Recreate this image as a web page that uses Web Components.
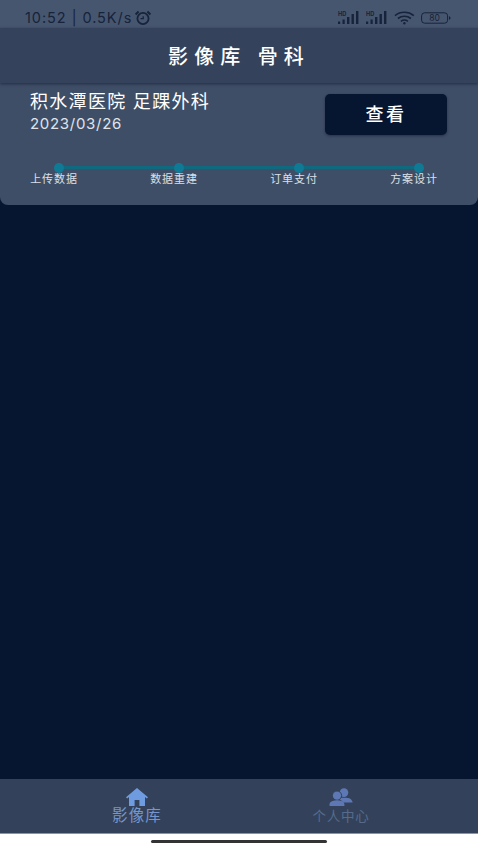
<!DOCTYPE html>
<html lang="zh">
<head>
<meta charset="utf-8">
<title>影像库</title>
<style>
  html, body { margin: 0; height: 100%; background: #061631; }
  body { font-family: Inter, "Noto Sans CJK SC", sans-serif; }
</style>
</head>
<body>
<app-shell>
  <status-bar slot="status"></status-bar>
  <app-header slot="header">影像库 骨科</app-header>
  <case-card hospital="积水潭医院 足踝外科" date="2023/03/26" action="查看">
    <progress-steps steps="上传数据,数据重建,订单支付,方案设计"></progress-steps>
  </case-card>
  <tab-bar slot="tabs">
    <tab-item label="影像库" icon="home" active></tab-item>
    <tab-item label="个人中心" icon="people"></tab-item>
  </tab-bar>
  <home-indicator slot="indicator"></home-indicator>
</app-shell>

<script>
class AppShell extends HTMLElement {
  constructor() {
    super();
    this.attachShadow({ mode: 'open' }).innerHTML = `<style>
      :host { display: flex; flex-direction: column; height: 850px; background: #061631; overflow: hidden; }
      main { flex: 1; min-height: 0; }
    </style>
    <slot name="status"></slot>
    <slot name="header"></slot>
    <main><slot></slot></main>
    <slot name="tabs"></slot>
    <slot name="indicator"></slot>`;
  }
}

class StatusBar extends HTMLElement {
  constructor() {
    super();
    this.attachShadow({ mode: 'open' }).innerHTML = `<style>
      :host { display: flex; align-items: center; justify-content: space-between; box-sizing: border-box;
        height: 28px; padding: 7px 27px 0 25px; background: #47566f; color: #16233a; }
      .left { display: flex; align-items: center; gap: 2px; font-size: 14.5px; letter-spacing: .95px; white-space: nowrap; }
      .right { display: flex; align-items: center; gap: 6px; }
      svg { display: block; }
    </style>
    <div class="left"><span>10:52 | 0.5K/s</span>
      <svg width="18" height="16" viewBox="0 0 18 16" fill="none" stroke="#16233a">
        <circle cx="9" cy="8.500" r="5.600" stroke-width="1.800"/>
        <path d="M6.500 8.700h2.700V6.200" stroke-width="1.300"/>
        <path d="M1.600 4.400 4.600 1.600M16.400 4.400 13.400 1.600" stroke-width="2"/>
      </svg>
    </div>
    <div class="right">
      ${this.signal()}${this.signal()}
      <svg width="21" height="14" viewBox="0 0 21 14" fill="none" stroke="#16233a" stroke-width="1.600">
        <path d="M1 4.600C6.400 .2 14.400 .2 19.800 4.600"/>
        <path d="M3.900 7.500c3.800-3 9.200-3 13 0"/>
        <path d="M6.900 10.300c2.100-1.500 5-1.500 7 0"/>
        <circle cx="10.400" cy="12.200" r="1.200" fill="#16233a" stroke="none"/>
      </svg>
      <svg width="30" height="12" viewBox="0 0 30 12">
        <rect x=".6" y=".8" width="26" height="10.400" rx="3" fill="none" stroke="#16233a" stroke-width="1"/>
        <path d="M28 4.200c1 .3 1.500 1 1.500 1.800s-.5 1.500-1.500 1.800z" fill="#16233a"/>
        <text x="13.600" y="9" text-anchor="middle" font-size="8.500" font-family="Inter, sans-serif" fill="#16233a">80</text>
      </svg>
    </div>`;
  }

  signal() {
    return `<svg width="22" height="13" viewBox="0 0 22 13" fill="#16233a">
      <text x="0" y="5.400" font-size="5.600" font-weight="700" font-family="Inter, sans-serif">HD</text>
      <rect x="0" y="10.500" width="2.200" height="2.500"/><rect x="4.500" y="8.500" width="2.200" height="4.500"/>
      <rect x="9" y="6" width="2.400" height="7"/><rect x="13.500" y="3" width="2.400" height="10"/>
      <rect x="18" y="0" width="2.400" height="13"/>
    </svg>`;
  }
}

class AppHeader extends HTMLElement {
  constructor() {
    super();
    this.attachShadow({ mode: 'open' }).innerHTML = `<style>
      :host { display: flex; align-items: center; justify-content: center; position: relative; z-index: 1; box-sizing: border-box;
        height: 55px; background: #34435b; color: #fff; font-size: 20px; font-weight: 500; letter-spacing: 6.1px;
        box-shadow: 0 1px 3px rgba(8, 16, 34, .55); padding-bottom: 1px; }
    </style><slot></slot>`;
  }
}

class CaseCard extends HTMLElement {
  constructor() {
    super();
    this.attachShadow({ mode: 'open' }).innerHTML = `<style>
      :host { display: block; box-sizing: border-box; height: 122px; padding: 9px 31px 0 30px;
        background: #3f4e67; border-radius: 0 0 8px 8px; color: #fff; }
      .top { display: flex; justify-content: space-between; align-items: flex-start; }
      .name { font-size: 18px; line-height: 20px; letter-spacing: 1.3px; white-space: nowrap; }
      .date { margin-top: 2px; font-size: 15px; line-height: 20px; letter-spacing: .7px; color: #dfe3ea; }
      button { box-sizing: border-box; width: 122px; height: 41px; margin-top: 2px; padding: 0 0 3px; border: 0; border-radius: 5px;
        background: #061631; color: #fff; font: 500 18px Inter, "Noto Sans CJK SC", sans-serif; letter-spacing: 2.5px;
        box-shadow: 0 1px 3px rgba(6, 14, 32, .45); }
      .steps { margin: 28px 9px 0 0; }
    </style>
    <div class="top">
      <div>
        <div class="name">${this.getAttribute('hospital')}</div>
        <div class="date">${this.getAttribute('date')}</div>
      </div>
      <button>${this.getAttribute('action')}</button>
    </div>
    <div class="steps"><slot></slot></div>`;
  }
}

class ProgressSteps extends HTMLElement {
  constructor() {
    super();
    const steps = this.getAttribute('steps').split(',');
    const items = steps.map(s => `<div class="step"><i></i><span>${s}</span></div>`).join('');
    this.attachShadow({ mode: 'open' }).innerHTML = `<style>
      :host { display: block; position: relative; }
      .row { display: flex; justify-content: space-between; }
      .line { position: absolute; left: 29px; right: 18px; top: 3px; height: 3px; background: #0f6a80; }
      .step { display: flex; flex-direction: column; align-items: center; width: 48px; position: relative; }
      i { width: 10px; height: 10px; border-radius: 50%; background: #0f7a95; margin-left: 10px; }
      span { font-size: 11px; line-height: 12px; color: #dbe0e8; white-space: nowrap; letter-spacing: .9px; }
    </style>
    <div class="line"></div>
    <div class="row">${items}</div>`;
  }
}

class TabBar extends HTMLElement {
  constructor() {
    super();
    this.attachShadow({ mode: 'open' }).innerHTML = `<style>
      :host { display: grid; grid-template-columns: 274px 134px; box-sizing: border-box; height: 55px;
        background: #33425a; border-bottom: 1px solid #8b94a3; }
    </style><slot></slot>`;
  }
}

class TabItem extends HTMLElement {
  constructor() {
    super();
    const active = this.hasAttribute('active');
    const icons = {
      home: `<svg width="22" height="18" viewBox="0 0 22 18" fill="#6f9be0">
        <path d="M11 0 0 9.200l1.200 1.300L3 9v9h5.600v-6h4.800v6H19V9l1.800 1.500L22 9.200z"/></svg>`,
      people: `<svg width="24" height="18" viewBox="0 0 24 18" fill="#5d78b4">
        <circle cx="15" cy="4.600" r="4.300"/><path d="M9 11c1.600-1.600 10-1.800 12.200-.2 1.400 1 2.200 2.200 2.400 3.600H14c-.9-1.600-2.800-2.800-5-3.400z"/>
        <circle cx="8" cy="7.600" r="4.600" stroke="#33425a"/><path d="M.6 18c-.6-2.600.6-4.400 3-5.100 2.600-.8 6.400-.8 8.800 0 2.400.7 3.400 2.500 3 5.100z"/></svg>`
    };
    this.attachShadow({ mode: 'open' }).innerHTML = `<style>
      :host { display: flex; flex-direction: column; align-items: center; padding-top: 9px; }
      span { font-size: ${active ? 15.5 : 13.5}px; line-height: 18px; margin-top: 1px; letter-spacing: ${active ? 1.2 : .8}px; color: ${active ? '#7596ce' : '#566a8c'}; }
      svg { display: block; }
    </style>${icons[this.getAttribute('icon')]}<span>${this.getAttribute('label')}</span>`;
  }
}

class HomeIndicator extends HTMLElement {
  constructor() {
    super();
    this.attachShadow({ mode: 'open' }).innerHTML = `<style>
      :host { display: flex; justify-content: center; align-items: flex-start; flex: none; box-sizing: border-box; height: 16px; padding-top: 6px; background: #fff; }
      div { width: 176px; height: 3px; border-radius: 2px; background: #333; }
    </style><div></div>`;
  }
}

customElements.define('app-shell', AppShell);
customElements.define('status-bar', StatusBar);
customElements.define('app-header', AppHeader);
customElements.define('case-card', CaseCard);
customElements.define('progress-steps', ProgressSteps);
customElements.define('tab-bar', TabBar);
customElements.define('tab-item', TabItem);
customElements.define('home-indicator', HomeIndicator);
</script>
</body>
</html>
